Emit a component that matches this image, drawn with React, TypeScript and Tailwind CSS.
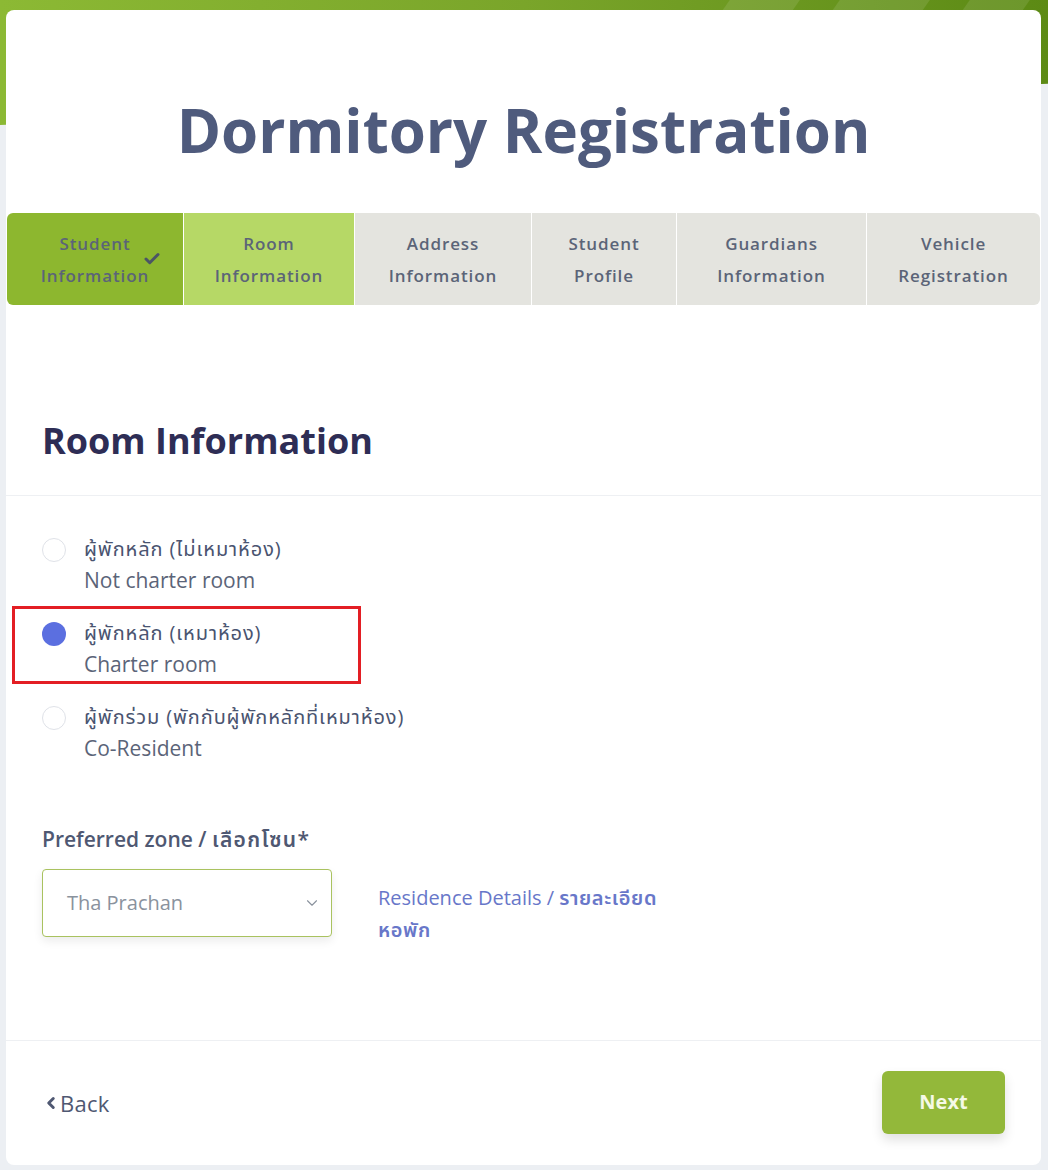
import { Check, ChevronDown, ChevronLeft } from "lucide-react";

const FONT = { fontFamily: '"Open Sans", "Noto Sans Thai", "Noto Sans", sans-serif' };

const STEPS = [
  { a: "Student", b: "Information", w: "w-[176px]", bg: "bg-[#8db72f]", done: true },
  { a: "Room", b: "Information", w: "w-[171px]", bg: "bg-[#b6d866]" },
  { a: "Address", b: "Information", w: "w-[177px]", bg: "bg-[#e4e4df]" },
  { a: "Student", b: "Profile", w: "w-[145px]", bg: "bg-[#e4e4df]" },
  { a: "Guardians", b: "Information", w: "w-[190px]", bg: "bg-[#e4e4df]" },
  { a: "Vehicle", b: "Registration", w: "flex-1", bg: "bg-[#e4e4df]" },
];

const OPTIONS = [
  { th: "ผู้พักหลัก (ไม่เหมาห้อง)", en: "Not charter room", on: false },
  { th: "ผู้พักหลัก (เหมาห้อง)", en: "Charter room", on: true },
  { th: "ผู้พักร่วม (พักกับผู้พักหลักที่เหมาห้อง)", en: "Co-Resident", on: false },
];

function Radio({ on }: { on: boolean }) {
  return on ? (
    <div className="h-6 w-6 shrink-0 rounded-full bg-[#5b6fe0]" />
  ) : (
    <div className="h-6 w-6 shrink-0 rounded-full border border-[#dfe2e8] bg-white" />
  );
}

export default function App() {
  return (
    <div className="relative min-h-[1170px] overflow-hidden bg-[#eceff3]" style={FONT}>
      <div className="absolute inset-x-0 top-0 h-[125px] overflow-hidden bg-gradient-to-r from-[#8cb934] via-[#7aa52a] to-[#5c8a14] [clip-path:polygon(0_0,100%_0,100%_67%,0_100%)]">
        <div className="absolute -top-4 left-[720px] h-[60px] w-[70px] -skew-x-[35deg] bg-white/10" />
        <div className="absolute -top-4 left-[830px] h-[60px] w-[90px] -skew-x-[35deg] bg-white/10" />
        <div className="absolute -top-4 left-[960px] h-[60px] w-[60px] -skew-x-[35deg] bg-white/10" />
      </div>

      <div className="relative ml-[6px] mr-[7px] mt-[10px] flex h-[1155px] flex-col rounded-lg bg-white">
        <div className="flex h-[203px] items-start justify-center pt-[80px]">
          <h1 className="text-[60px] font-bold leading-[80px] text-[#4f5b7d]">Dormitory Registration</h1>
        </div>

        <div className="mx-px flex h-[92px] overflow-hidden rounded-md">
          {STEPS.map((s, i) => (
            <div
              key={i}
              className={`relative flex flex-col items-center justify-center pt-[2px] ${s.w} ${s.bg} ${i > 0 ? "border-l border-white" : ""} text-[17px] font-semibold leading-[32px] tracking-[0.9px] text-[#5b6478]`}
            >
              <span>{s.a}</span>
              <span>{s.b}</span>
              {s.done && (
                <Check className="absolute right-[22px] top-[37px] h-[18px] w-[18px] text-[#4b5565]" strokeWidth={4} />
              )}
            </div>
          ))}
        </div>

        <div className="flex h-[191px] items-end border-b border-[#eef0f3] px-[36px] pb-[31px]">
          <h2 className="text-[36px] font-bold leading-[46px] text-[#2e2d55]">Room Information</h2>
        </div>

        <div className="flex flex-col px-[36px] pt-[38px]">
          {OPTIONS.map((o, i) => (
            <div key={i} className="relative flex h-[84px] items-start gap-[18px]">
              {o.on && (
                <div className="absolute left-[-30px] top-[-12px] h-[78px] w-[349px] border-[3px] border-[#e31e24]" />
              )}
              <div className="pt-[4px]">
                <Radio on={o.on} />
              </div>
              <div className="flex flex-col">
                <span className="text-[20px] leading-[30px] tracking-[0.9px] text-[#4a5470]">{o.th}</span>
                <span className="text-[21px] leading-[32px] text-[#5b6478]">{o.en}</span>
              </div>
            </div>
          ))}

          <div className="mt-[39px] text-[21px] font-semibold leading-[28px] text-[#4f5872]">
            Preferred zone / <span className="tracking-[1.3px]">เลือกโซน*</span>
          </div>
          <div className="mt-[16px] flex items-start gap-[46px]">
            <div className="flex h-[68px] w-[290px] items-center justify-between rounded-[4px] border border-[#a9c25f] bg-white pl-[24px] pr-[10px] shadow-[0_4px_10px_rgba(0,0,0,0.08)]">
              <span className="text-[20px] text-[#8a929d]">Tha Prachan</span>
              <ChevronDown className="h-[18px] w-[18px] text-[#8a929d]" strokeWidth={1.5} />
            </div>
            <div className="w-[300px] pt-[13px] text-[20px] leading-[32px] text-[#6877c9]">
              <div>
                Residence Details / <span className="font-semibold tracking-[0.6px]">รายละเอียด</span>
              </div>
              <div className="font-semibold tracking-[0.6px]">หอพัก</div>
            </div>
          </div>
        </div>

        <div className="mt-auto flex h-[125px] items-center justify-between border-t border-[#eef0f3] pl-[36px] pr-[36px]">
          <div className="flex items-center text-[22px] tracking-[0.3px] text-[#4f5872]">
            <ChevronLeft className="h-[18px] w-[18px]" strokeWidth={4} />
            <span>Back</span>
          </div>
          <button className="mb-[2px] h-[63px] w-[123px] rounded-md bg-[#93b83a] text-[20px] font-bold text-[#f5f9e6] shadow-[0_6px_12px_rgba(0,0,0,0.12)]">
            Next
          </button>
        </div>
      </div>
    </div>
  );
}
